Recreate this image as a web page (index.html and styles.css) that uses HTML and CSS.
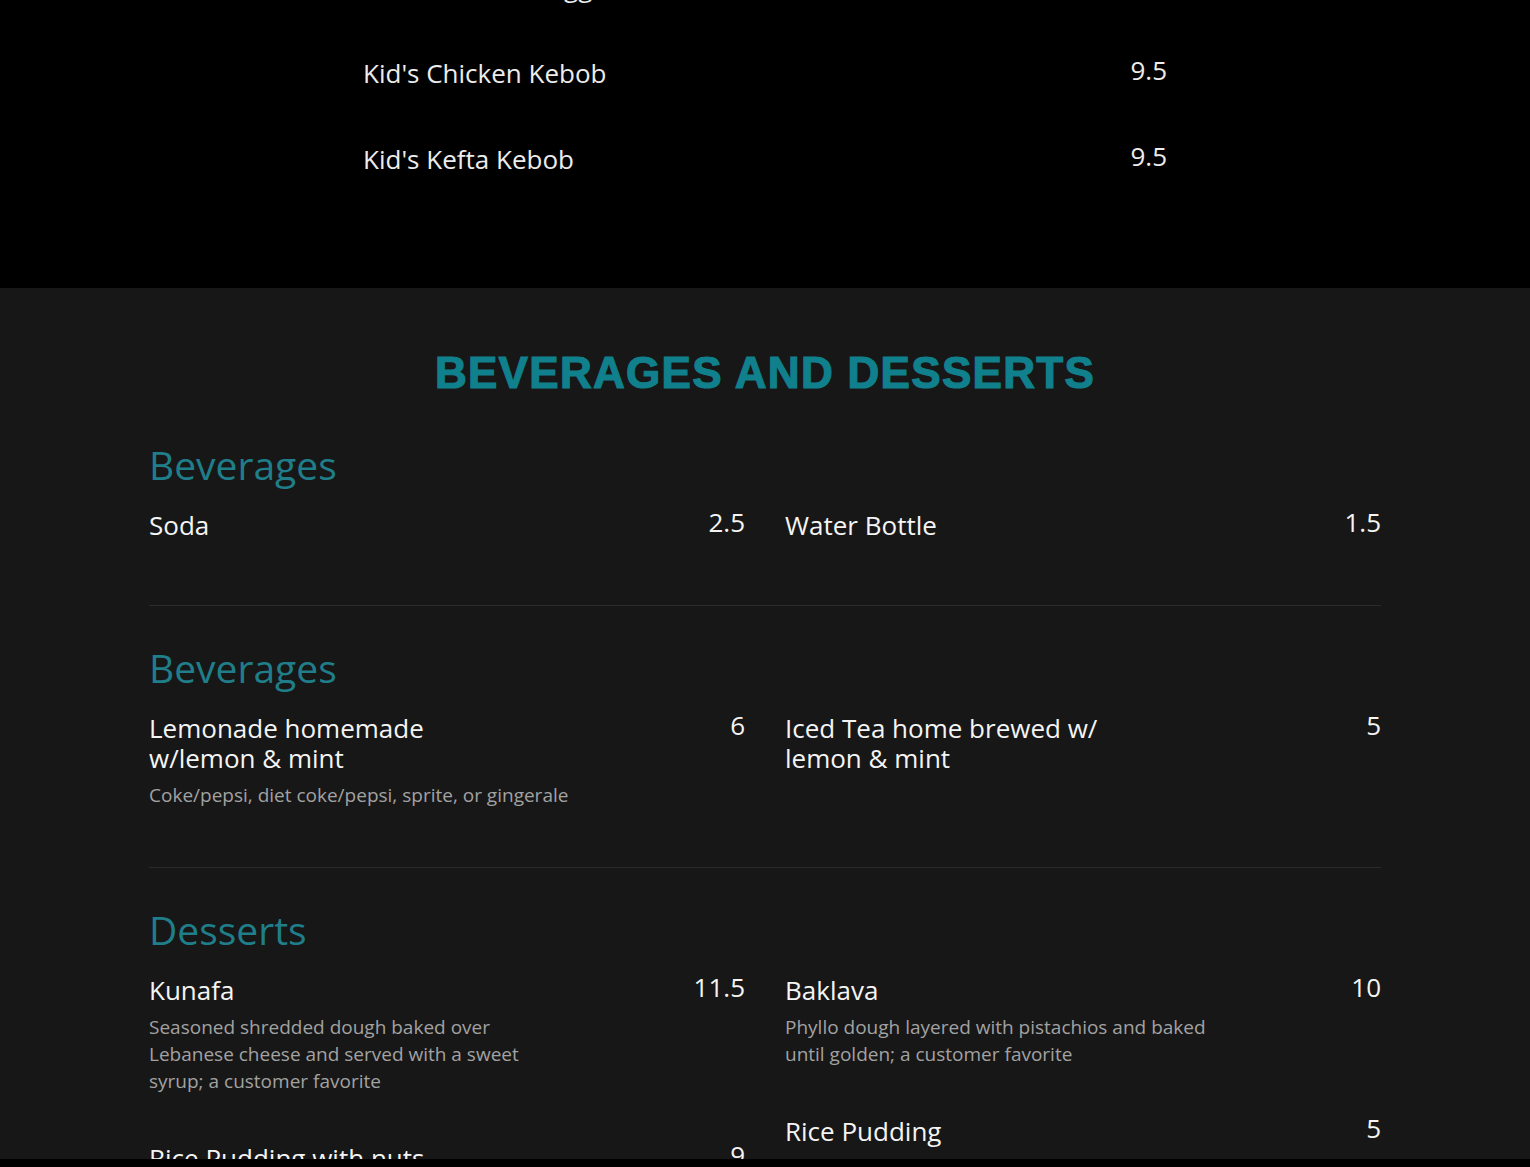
FILE: index.html
```html
<!DOCTYPE html>
<html lang="en">
<head>
<meta charset="utf-8">
<title>Menu</title>
<link rel="stylesheet" href="styles.css">
</head>
<body>
<div class="page">
  <section class="kids">
    <div class="kids-list">
      <div class="kid-row"><span class="kid-name">Kid's Chicken Nuggets</span><span class="kid-price">9.5</span></div>
      <div class="kid-row"><span class="kid-name">Kid's Chicken Kebob</span><span class="kid-price">9.5</span></div>
      <div class="kid-row"><span class="kid-name">Kid's Kefta Kebob</span><span class="kid-price">9.5</span></div>
    </div>
  </section>

  <section class="menu">
    <h2 class="menu-title">BEVERAGES AND DESSERTS</h2>
    <div class="menu-inner">
      <div class="category">
        <h3 class="cat-title">Beverages</h3>
        <div class="cols">
          <div class="col">
            <div class="item">
              <div class="item-head"><span class="item-name">Soda</span><span class="item-price">2.5</span></div>
            </div>
          </div>
          <div class="col">
            <div class="item">
              <div class="item-head"><span class="item-name">Water Bottle</span><span class="item-price">1.5</span></div>
            </div>
          </div>
        </div>
      </div>

      <div class="category">
        <h3 class="cat-title">Beverages</h3>
        <div class="cols">
          <div class="col">
            <div class="item">
              <div class="item-head"><span class="item-name">Lemonade homemade w/lemon &amp; mint</span><span class="item-price">6</span></div>
              <p class="item-desc">Coke/pepsi, diet coke/pepsi, sprite, or gingerale</p>
            </div>
          </div>
          <div class="col">
            <div class="item">
              <div class="item-head"><span class="item-name">Iced Tea home brewed w/ lemon &amp; mint</span><span class="item-price">5</span></div>
            </div>
          </div>
        </div>
      </div>

      <div class="category last">
        <h3 class="cat-title">Desserts</h3>
        <div class="cols">
          <div class="col">
            <div class="item">
              <div class="item-head"><span class="item-name">Kunafa</span><span class="item-price">11.5</span></div>
              <p class="item-desc">Seasoned shredded dough baked over<br>Lebanese cheese and served with a sweet<br>syrup; a customer favorite</p>
            </div>
            <div class="item">
              <div class="item-head"><span class="item-name">Rice Pudding with nuts</span><span class="item-price">9</span></div>
            </div>
          </div>
          <div class="col">
            <div class="item">
              <div class="item-head"><span class="item-name">Baklava</span><span class="item-price">10</span></div>
              <p class="item-desc">Phyllo dough layered with pistachios and baked<br>until golden; a customer favorite</p>
            </div>
            <div class="item">
              <div class="item-head"><span class="item-name">Rice Pudding</span><span class="item-price">5</span></div>
            </div>
          </div>
        </div>
      </div>
    </div>
  </section>
</div>
<div class="bottom-bar"></div>
</body>
</html>
```

FILE: styles.css
```css
html, body {
  margin: 0;
  padding: 0;
  background: #000;
  height: 100%;
  overflow: hidden;
}

body {
  font-family: "Open Sans", "Liberation Sans", sans-serif;
  color: #f2f2f2;
}

.page {
  margin-top: -86px;
}

.kids {
  background: #000;
  padding: 58px 0 114px;
}

.kids-list {
  width: 804px;
  margin: 0 auto;
  display: flex;
  flex-direction: column;
  gap: 56px;
}

.kid-row {
  display: flex;
  justify-content: space-between;
  align-items: flex-start;
  height: 30px;
}

.kid-name {
  font-size: 26px;
  line-height: 30px;
  color: #ececec;
}

.kid-price {
  font-size: 26px;
  line-height: 30px;
  margin-top: -3px;
  color: #ececec;
}

.menu {
  background: #171717;
  padding: 57px 0 60px;
}

.menu-title {
  margin: 0 0 40px;
  text-align: center;
  font-family: "Liberation Sans", Arial, sans-serif;
  font-weight: 700;
  font-size: 44px;
  line-height: 56px;
  letter-spacing: 1.3px;
  color: #10808d;
  -webkit-text-stroke: 1.2px #10808d;
}

.menu-inner {
  width: 1232px;
  margin: 0 auto;
}

.category {
  border-bottom: 1px solid #2b2b2b;
  padding-bottom: 65px;
  margin-bottom: 38px;
}

.category.last {
  border-bottom: none;
}

.cat-title {
  margin: 0 0 21px;
  font-weight: 400;
  font-size: 39px;
  line-height: 48px;
  color: #1f7e89;
}

.cols {
  display: grid;
  grid-template-columns: 1fr 1fr;
  column-gap: 40px;
}

.col {
  display: flex;
  flex-direction: column;
  gap: 55px;
}

.item-head {
  display: flex;
  justify-content: space-between;
  align-items: flex-start;
}

.item-name {
  font-size: 26px;
  line-height: 30px;
  max-width: 330px;
  color: #f4f4f4;
}

.item-price {
  font-size: 26px;
  line-height: 30px;
  margin-top: -3px;
  color: #f4f4f4;
}

.item-desc {
  margin: 9px 0 -7px;
  font-size: 19px;
  line-height: 27px;
  color: #a2a2a2;
}

.bottom-bar {
  position: fixed;
  left: 0;
  right: 0;
  bottom: 0;
  height: 8px;
  background: #000;
}
```
